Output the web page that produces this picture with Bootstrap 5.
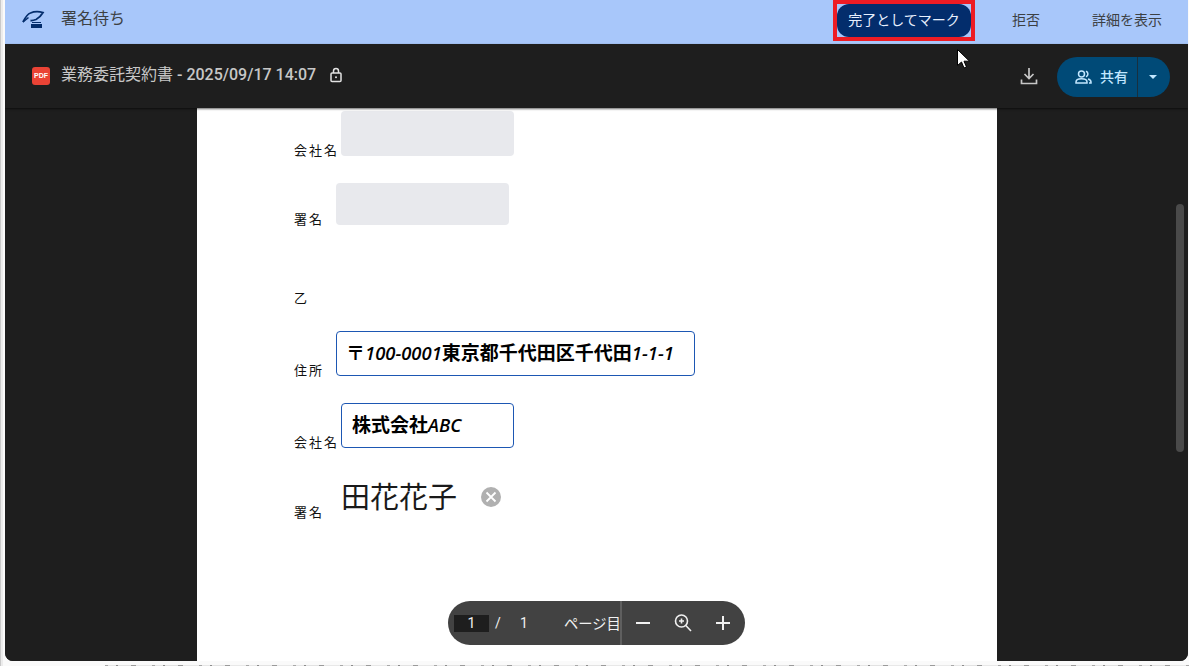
<!DOCTYPE html>
<html lang="ja">
<head>
<meta charset="utf-8">
<title>業務委託契約書</title>
<link href="https://cdn.jsdelivr.net/npm/bootstrap@5.3.0/dist/css/bootstrap.min.css" rel="stylesheet">
<style>
html,body{height:666px;overflow:hidden}
body{background:linear-gradient(to right,#c9c9c9 0,#c9c9c9 1px,#ececec 1px,#ececec 3px,#fafafa 3px,#fafafa 100%);font-family:"Roboto","Noto Sans CJK JP",sans-serif;position:relative}
.app-win{margin-left:5px;width:1183px;height:661px;border-radius:0 0 8px 8px;overflow:hidden;background:#1e1e1e;position:relative}
.desk-strip{height:1px;margin-top:4px;margin-left:105px;background:repeating-linear-gradient(to right,#a8a8a8 0,#a8a8a8 3px,#e6e6e6 3px,#e6e6e6 11px,#8c8c8c 11px,#8c8c8c 13px,#e2e2e2 13px,#e2e2e2 26px,#9a9a9a 26px,#9a9a9a 31px,#e8e8e8 31px,#e8e8e8 47px)}
.sign-bar{height:44px;background:#a8c7fa;color:#3c4043;font-size:14px}
.sign-ico{width:26px;height:22px;margin:-6px 16px 0 14px;flex:none}
.sign-title{font-size:16px;line-height:20px;margin-top:-6px}
.mark-ring{border:4px solid #ed1c24;height:41px;width:142px;margin-right:37px;align-self:flex-start}
.mark-btn{background:#032d6c;color:#e8f0fe;border:0;border-radius:12px;font-size:14px;width:134px;height:33px;padding:0;display:block}
.sign-link{width:28px;margin-right:52px;white-space:nowrap;margin-top:-3px}
.sign-link2{margin-right:26px;white-space:nowrap;margin-top:-3px}
.doc-bar{height:64px;background:#1e1e1e;color:#c7c7c7;box-shadow:0 1px 2px rgba(0,0,0,.6);position:relative;z-index:2}
.pdf-ico{width:18px;height:18px;background:#ea4335;border-radius:3px;color:#fff;font:700 7px/18px "Liberation Sans",sans-serif;text-align:center;margin:0 11px 0 27px}
.doc-title{font-size:16px;font-weight:500;line-height:20px;white-space:nowrap;margin-top:-2px}
.doc-title span{font-weight:400}
.lock-ico{width:14px;height:16px;margin-left:13px;margin-top:-2px}
.dl-ico{width:20px;height:20px;margin-right:18px;color:#c7c7c7}
.share-pill{width:113px;height:40px;border-radius:20px;background:#004a77;color:#c2e7ff;margin-right:18px;margin-top:2px;font-size:14px;font-weight:500}
.share-main{width:81px;padding-left:18px;gap:8px;border-right:1px solid #18303f;height:40px;flex:none}
.share-caret{width:0;height:0;border-left:4px solid transparent;border-right:4px solid transparent;border-top:4px solid #c2e7ff;margin-left:11px}
.doc-stage{height:553px;background:#1e1e1e;overflow:hidden;position:relative}
.doc-page{width:800px;height:560px;margin-left:192px;background:#fff;padding-left:97px;color:#111;position:relative;font-size:13px;font-family:"Noto Sans CJK JP",sans-serif}
.doc-row{display:flex;align-items:flex-end;position:relative}
.doc-lab{letter-spacing:2px;line-height:18px;white-space:nowrap;flex:none}
.lab-wide{width:47px}
.lab-mid{width:42px}
.fld{height:45px;border-radius:4px;flex:none}
.fld-empty{background:#e8e9ed}
.fld-set{border:1px solid #1d57b3;font:700 19px/41px "Open Sans","Noto Sans CJK JP",sans-serif;color:#000;padding-left:10px;white-space:nowrap}
.fld-set i{font-weight:600;font-size:18.4px}
.w-173{width:173px}
.w-359{width:359px}
.r1{padding-top:3px;margin-bottom:27px}
.r1 .doc-lab{margin-bottom:-3px}
.r2{height:42px}
.r2 .fld{height:42px}
.r2 .doc-lab{margin-bottom:-3px}
.r3{margin-top:64px;height:18px}
.r4{margin-top:24px}
.r4 .doc-lab{margin-bottom:-3px}
.r4 .fld-set{padding-left:9px}
.r5{margin-top:27px}
.r5 .doc-lab{margin-bottom:-3px}
.r6{margin-top:22px;height:48px}
.r6 .doc-lab{margin-bottom:-3px}
.sig-txt{font-size:29px;line-height:40px;font-weight:400;color:#1a1a1a;letter-spacing:0;margin-bottom:3px}
.sig-x{width:20px;height:20px;margin:0 0 11px 24px;flex:none}
.zoom-bar{position:absolute;left:443px;top:601px;width:297px;height:44px;background:#424242;border-radius:22px;color:#f1f1f1;font-size:14px;z-index:3}
.pg-box{width:35px;height:17px;background:#1e1e1e;margin-left:6px;text-align:center;line-height:17px}
.pg-sl{margin-left:6px;width:25px}
.pg-tot{width:44px}
.pg-lab{white-space:nowrap;font-family:"Noto Sans CJK JP",sans-serif;width:56px;overflow:hidden;font-size:14.3px}
.zb-sep{width:2px;height:44px;background:#5f5f5f;flex:none}
.zb-tools{gap:22px;padding-left:12px}
.zb-ico{width:18px;height:18px;flex:none}
.scr-thumb{position:absolute;left:1171px;top:204px;width:8px;height:248px;border-radius:4px;background:#4a4a4a;z-index:3}
.mouse-ptr{position:absolute;left:957px;top:49px;width:13px;height:20px;z-index:5}
</style>
</head>
<body>
<div class="app-win">
  <div class="sign-bar d-flex align-items-center">
    <svg class="sign-ico" viewBox="0 0 26 22" fill="none"><path d="M4 14C6 10 8 6 11.500 5c3.500-1.500 8.500-1.500 12.500-.5-2 3.500-4 5.500-7 7-2 .8-4 1.200-5.500 1" stroke="#032d6c" stroke-width="1.800"/><path d="M9.500 9.500 4 14" stroke="#032d6c" stroke-width="1.500"/><path d="M13 14.500h9" stroke="#032d6c" stroke-width="1"/><rect x="12" y="16" width="11" height="4" fill="#032d6c"/></svg>
    <div class="sign-title">署名待ち</div>
    <div class="ms-auto d-flex align-items-center h-100">
      <div class="mark-ring"><button class="mark-btn" type="button">完了としてマーク</button></div>
      <div class="sign-link">拒否</div>
      <div class="sign-link2">詳細を表示</div>
    </div>
  </div>
  <div class="doc-bar d-flex align-items-center">
    <div class="pdf-ico">PDF</div>
    <div class="doc-title"><span>業務委託契約書</span> - 2025/09/17 14:07</div>
    <svg class="lock-ico" viewBox="0 0 14 16" fill="none" stroke="#e3e3e3" stroke-width="1.500"><rect x="2" y="6" width="10" height="8.500" rx="1"/><path d="M4.500 6V4a2.500 2.500 0 0 1 5 0v2"/><circle cx="7" cy="10.200" r="1" fill="#e3e3e3" stroke="none"/></svg>
    <div class="ms-auto d-flex align-items-center">
      <svg class="dl-ico" viewBox="0 0 20 20" fill="none" stroke="currentColor" stroke-width="1.700"><path d="M10 2v10M5.500 8 10 12.500 14.500 8M2.500 13.500v4h15v-4"/></svg>
      <div class="share-pill d-flex align-items-center">
        <div class="share-main d-flex align-items-center">
          <svg width="17" height="14" viewBox="0 0 17 14" fill="none" stroke="#c2e7ff" stroke-width="1.500"><circle cx="6.500" cy="4" r="3"/><path d="M1 13v-1c0-2 2.500-3.200 5.500-3.200S12 10 12 12v1zM11 1.200a3 3 0 0 1 0 5.600M13 9c1.800.5 3 1.500 3 3v1h-2"/></svg>
          <span>共有</span>
        </div>
        <div class="share-caret"></div>
      </div>
    </div>
  </div>
  <div class="doc-stage">
    <div class="doc-page">
      <div class="doc-row r1"><span class="doc-lab lab-wide">会社名</span><div class="fld fld-empty w-173"></div></div>
      <div class="doc-row r2"><span class="doc-lab lab-mid">署名</span><div class="fld fld-empty w-173"></div></div>
      <div class="doc-row r3"><span class="doc-lab">乙</span></div>
      <div class="doc-row r4"><span class="doc-lab lab-mid">住所</span><div class="fld fld-set w-359">〒<i>100-0001</i>東京都千代田区千代田<i>1-1-1</i></div></div>
      <div class="doc-row r5"><span class="doc-lab lab-wide">会社名</span><div class="fld fld-set w-173">株式会社<i>ABC</i></div></div>
      <div class="doc-row r6"><span class="doc-lab lab-wide">署名</span><span class="sig-txt">田花花子</span>
        <svg class="sig-x" viewBox="0 0 20 20"><circle cx="10" cy="10" r="10" fill="#b0b0b0"/><path d="M5.500 5.500l9 9M14.500 5.500l-9 9" stroke="#fff" stroke-width="1.800"/></svg>
      </div>
    </div>
  </div>
  <div class="zoom-bar d-flex align-items-center">
    <div class="pg-box">1</div>
    <div class="pg-sl">/</div>
    <div class="pg-tot">1</div>
    <div class="pg-lab">ページ目</div>
    <div class="zb-sep"></div>
    <div class="d-flex align-items-center zb-tools">
      <svg class="zb-ico" viewBox="0 0 18 18"><path d="M2 9h14" stroke="#f1f1f1" stroke-width="2"/></svg>
      <svg class="zb-ico" viewBox="0 0 18 18" fill="none" stroke="#f1f1f1" stroke-width="1.600"><circle cx="7.500" cy="7" r="6"/><path d="M11.800 11.500 17 17M5 7h5M7.500 4.500v5"/></svg>
      <svg class="zb-ico" viewBox="0 0 18 18"><path d="M2 9h14M9 2v14" stroke="#f1f1f1" stroke-width="2"/></svg>
    </div>
  </div>
  <div class="scr-thumb"></div>
</div>
<div class="desk-strip"></div>
<svg class="mouse-ptr" viewBox="0 0 13 20"><path d="M.5.500v16l4-3.500 2.500 6 2.500-1-2.500-5.800h5.500z" fill="#fff" stroke="#000"/></svg>
<script src="https://cdn.jsdelivr.net/npm/bootstrap@5.3.0/dist/js/bootstrap.bundle.min.js"></script>
</body>
</html>
